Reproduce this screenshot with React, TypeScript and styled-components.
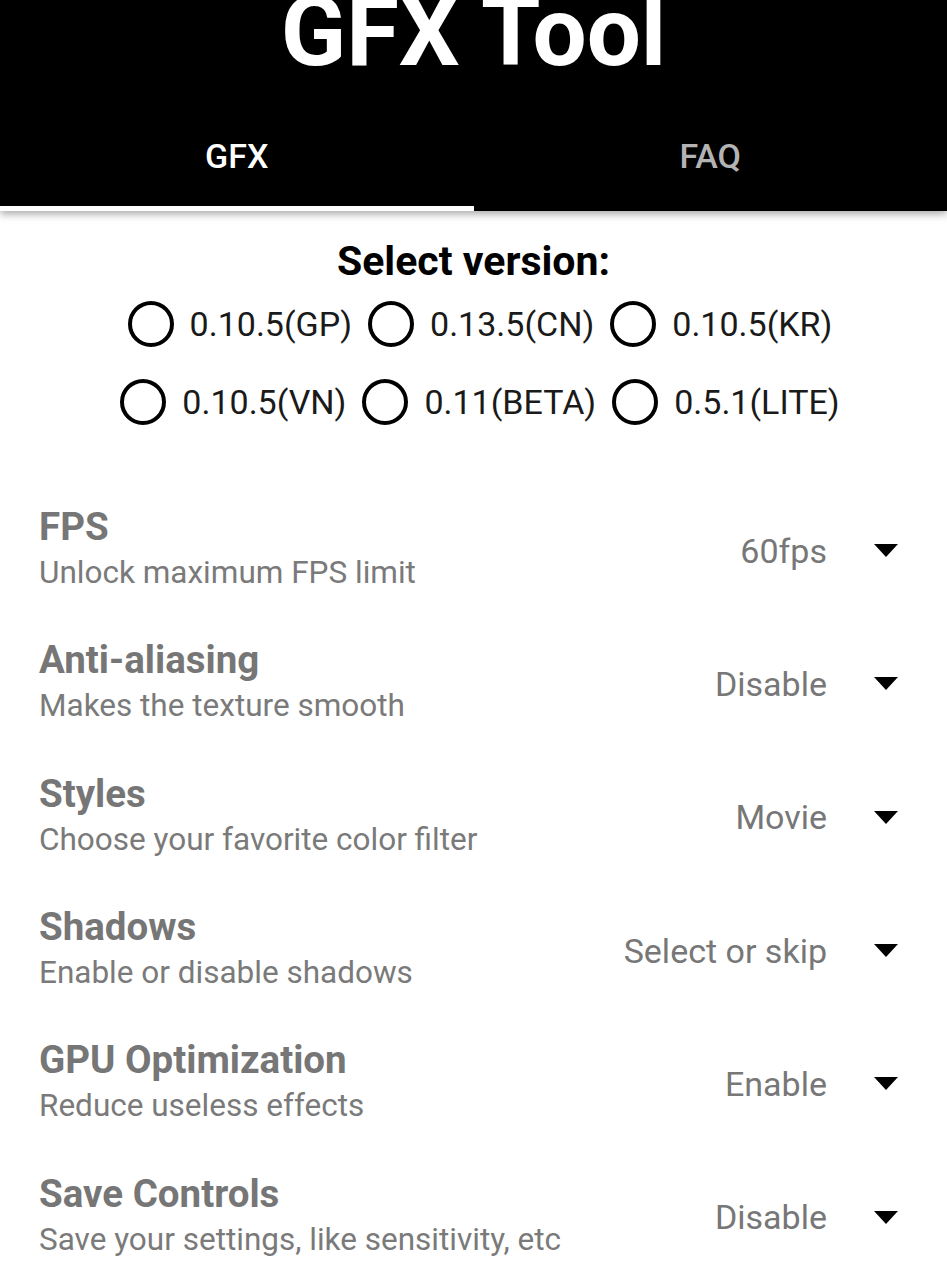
import { FC, useState } from "react";
import styled, { createGlobalStyle } from "styled-components";

const GlobalStyle = createGlobalStyle`
  html, body {
    margin: 0;
    padding: 0;
    background: #ffffff;
    font-family: Roboto, "Noto Sans", "Liberation Sans", sans-serif;
    overflow: hidden;
  }
`;

const Page = styled.div`
  width: 947px;
  height: 1280px;
  overflow: hidden;
  background: #fff;
`;

const Header = styled.header`
  background: #000;
  box-shadow: 0 3px 8px rgba(0, 0, 0, 0.35);
  position: relative;
  z-index: 1;
`;

const AppTitle = styled.h1`
  margin: -16px 0 35px;
  color: #fff;
  font-size: 96px;
  line-height: 96px;
  font-weight: 700;
  text-align: center;
`;

const TabBar = styled.nav`
  display: flex;
  height: 96px;
`;

const Tab = styled.div<{ $active?: boolean }>`
  flex: 1;
  display: flex;
  justify-content: center;
  padding-top: 21px;
  box-sizing: border-box;
  color: ${({ $active }) => ($active ? "#fff" : "#b3b3b3")};
  font-size: 34px;
  line-height: 40px;
  font-weight: 500;
  border-bottom: 5px solid ${({ $active }) => ($active ? "#fff" : "transparent")};
`;

const VersionSection = styled.section`
  padding-top: 26px;
`;

const SectionTitle = styled.h2`
  margin: 0;
  font-size: 41px;
  line-height: 48px;
  font-weight: 700;
  color: #000;
  text-align: center;
`;

const RadioRow = styled.div<{ $shift: number }>`
  display: flex;
  justify-content: center;
  gap: 16px;
  height: 78px;
  padding-left: ${({ $shift }) => $shift}px;
`;

const RadioItem = styled.label`
  display: flex;
  align-items: center;
  gap: 16px;
  cursor: pointer;
`;

const RadioCircle = styled.span<{ $checked: boolean }>`
  width: 46px;
  height: 46px;
  box-sizing: border-box;
  border-radius: 50%;
  border: 4.5px solid #000;
  display: flex;
  align-items: center;
  justify-content: center;

  &::after {
    content: "";
    width: 22px;
    height: 22px;
    border-radius: 50%;
    background: #000;
    display: ${({ $checked }) => ($checked ? "block" : "none")};
  }
`;

const RadioLabel = styled.span`
  font-size: 34px;
  line-height: 40px;
  color: #1a1a1a;
`;

const Settings = styled.section`
  margin-top: 43px;
`;

const SettingRow = styled.div`
  display: flex;
  align-items: center;
  height: 133.3px;
  padding: 0 49px 0 39px;
  box-sizing: border-box;
`;

const SettingText = styled.div`
  flex: 1;
  display: flex;
  flex-direction: column;
`;

const SettingName = styled.div`
  font-size: 38.5px;
  line-height: 42px;
  font-weight: 700;
  color: #767676;
`;

const SettingHint = styled.div`
  margin-top: 3px;
  font-size: 31.5px;
  line-height: 44px;
  color: #7a7a7a;
`;

const Dropdown = styled.div`
  display: flex;
  align-items: center;
  gap: 47px;
`;

const DropdownValue = styled.span`
  font-size: 34px;
  line-height: 38px;
  color: #777;
`;

const Caret = styled.svg`
  width: 24px;
  height: 13px;
  display: block;
`;

const versions = [
  ["0.10.5(GP)", "0.13.5(CN)", "0.10.5(KR)"],
  ["0.10.5(VN)", "0.11(BETA)", "0.5.1(LITE)"],
];

const settings = [
  { name: "FPS", hint: "Unlock maximum FPS limit", value: "60fps" },
  { name: "Anti-aliasing", hint: "Makes the texture smooth", value: "Disable" },
  { name: "Styles", hint: "Choose your favorite color filter", value: "Movie" },
  { name: "Shadows", hint: "Enable or disable shadows", value: "Select or skip" },
  { name: "GPU Optimization", hint: "Reduce useless effects", value: "Enable" },
  { name: "Save Controls", hint: "Save your settings, like sensitivity, etc", value: "Disable" },
];

const App: FC = () => {
  const [version, setVersion] = useState<string | null>(null);

  return (
    <Page>
      <GlobalStyle />
      <Header>
        <AppTitle>GFX Tool</AppTitle>
        <TabBar>
          <Tab $active>GFX</Tab>
          <Tab>FAQ</Tab>
        </TabBar>
      </Header>

      <VersionSection>
        <SectionTitle>Select version:</SectionTitle>
        {versions.map((row, i) => (
          <RadioRow key={i} $shift={13}>
            {row.map((v) => (
              <RadioItem key={v} onClick={() => setVersion(v)}>
                <RadioCircle $checked={version === v} />
                <RadioLabel>{v}</RadioLabel>
              </RadioItem>
            ))}
          </RadioRow>
        ))}
      </VersionSection>

      <Settings>
        {settings.map((s) => (
          <SettingRow key={s.name}>
            <SettingText>
              <SettingName>{s.name}</SettingName>
              <SettingHint>{s.hint}</SettingHint>
            </SettingText>
            <Dropdown>
              <DropdownValue>{s.value}</DropdownValue>
              <Caret viewBox="0 0 24 13">
                <path d="M0 0 H24 L12 13 Z" fill="#000" />
              </Caret>
            </Dropdown>
          </SettingRow>
        ))}
      </Settings>
    </Page>
  );
};

export default App;
